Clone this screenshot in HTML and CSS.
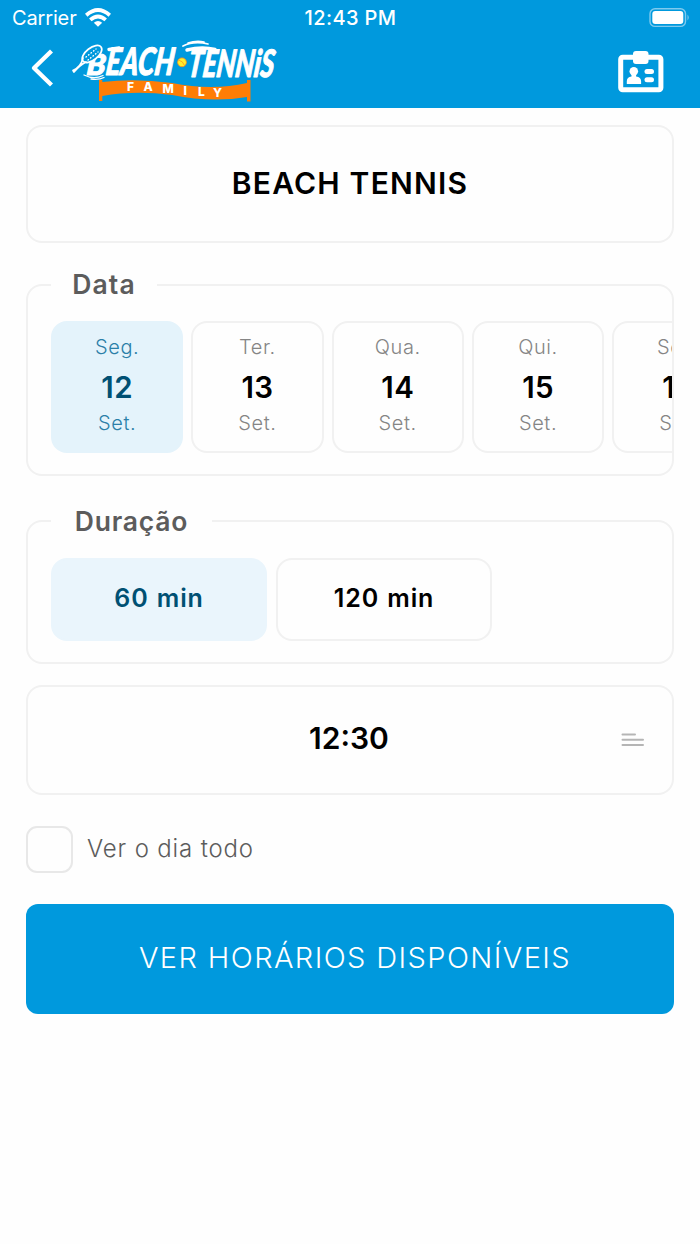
FILE: index.html
```html
<!DOCTYPE html>
<html lang="pt-BR">
<head>
<meta charset="utf-8">
<title>Beach Tennis Family</title>
<link rel="stylesheet" href="styles.css">
</head>
<body>
<header class="header">
  <div class="status">
    <div class="status-left"><span class="carrier">Carrier</span>
      <svg class="wifi" width="26" height="20" viewBox="0 0 26 20"><g fill="none" stroke="#fff" stroke-width="3.800"><path d="M1.200 7.200Q13-3.200 24.800 7.200"/><path d="M5.300 11.900Q13 5.200 20.700 11.900"/></g><path d="M8.800 14.800Q13 11.300 17.200 14.800L13 18.800Z" fill="#fff"/></svg>
    </div>
    <time class="clock">12:43 PM</time>
    <svg class="battery" width="42" height="20" viewBox="0 0 42 20"><rect x="1" y=".8" width="35.500" height="17.600" rx="5" fill="none" stroke="#7fcaee" stroke-width="1.400"/><rect x="3.300" y="3" width="31" height="13" rx="3" fill="#fff"/><path d="M38.500 6.500q2.500 3 0 6z" fill="#7fcaee"/></svg>
  </div>
  <nav class="nav">
    <svg class="back" width="24" height="40" viewBox="0 0 24 40"><path d="M21.500 3L4 20L21.500 37" fill="none" stroke="#fff" stroke-width="4.300" stroke-linejoin="round"/></svg>
    <svg class="logo" width="214" height="64" viewBox="70 38 214 64">
      <path d="M99 80H102.300V82Q135 78 172 83Q212 91 247 83V80H250.500V101.500H247V97Q212 103 172 95Q135 90 102.300 96V101H99Z" fill="#ff7d05"/>
      <g class="logo-word">
        <text transform="translate(86 74.500) skewX(-5)" textLength="19" lengthAdjust="spacingAndGlyphs">B</text>
        <text transform="translate(105 75) skewX(-7)" textLength="68" lengthAdjust="spacingAndGlyphs">EACH</text>
        <text transform="translate(187 76.500) skewX(-7)" textLength="86" lengthAdjust="spacingAndGlyphs">TENNiS</text>
      </g>
      <g fill="none" stroke="#fff" stroke-linecap="round" stroke-linejoin="round">
        <ellipse cx="92" cy="54" rx="11.500" ry="6" transform="rotate(-38 92 54)" stroke-width="1.700" fill="#0099dd"/>
        <path d="M83 58Q81 67 73 70.500M86 62Q80 65 74 72L73 70.500" stroke-width="1.700"/>
        <path d="M86 57L96 49M88 60L98 52" stroke-width="1.300" stroke-dasharray=".6 2.600"/>
        <path d="M84 75Q94 80 103 75.500M91 79Q99 80 104 77.500" stroke-width="1.300"/>
        <path d="M183 46Q194 40.500 208 44M188 43Q196 40.500 204 42" stroke-width="1.700"/>
        <path d="M109 49.500L119 48M187 50Q202 46 215 49.500" stroke-width="3.400"/>
      </g>
      <circle cx="182" cy="62.300" r="4.400" fill="#ffee2b" stroke="#ff8b18" stroke-width=".8"/><path d="M178.500 60Q183 61 184.500 65.500" stroke="#ff8b18" stroke-width=".7" fill="none"/>
      <g class="logo-sub"><text x="127" y="90.500">F</text><text x="143.500" y="91">A</text><text x="162.500" y="92.500">M</text><text x="183.500" y="94.500">I</text><text x="198" y="96">L</text><text x="213" y="97">Y</text></g>
    </svg>
    <svg class="badge" width="46" height="42" viewBox="0 0 46 42"><rect x="2.700" y="6.200" width="40.200" height="32.600" rx="2" fill="none" stroke="#fff" stroke-width="5"/><rect x="15" y="0" width="15.500" height="13" rx="3" fill="#fff"/><g fill="#fff"><circle cx="15.800" cy="20.200" r="4.300"/><path d="M13.500 23h4.600v2.500q5 .8 5 4.700V33H8.800v-2.800q0-3.900 4.700-4.700z"/><rect x="26.500" y="18" width="9.500" height="5" rx="2.500"/><rect x="26.500" y="26.300" width="9.500" height="5" rx="2.500"/></g></svg>
  </nav>
</header>
<main class="content">
  <section class="card sport"><span>BEACH TENNIS</span></section>
  <section class="card group dates">
    <h2 class="legend"><span>Data</span></h2>
    <div class="days">
      <div class="day selected"><span class="wk">Seg.</span><b>12</b><span class="mo">Set.</span></div>
      <div class="day"><span class="wk">Ter.</span><b>13</b><span class="mo">Set.</span></div>
      <div class="day"><span class="wk">Qua.</span><b>14</b><span class="mo">Set.</span></div>
      <div class="day"><span class="wk">Qui.</span><b>15</b><span class="mo">Set.</span></div>
      <div class="day"><span class="wk">Sex.</span><b>16</b><span class="mo">Set.</span></div>
    </div>
  </section>
  <section class="card group durations">
    <h2 class="legend wide"><span>Duração</span></h2>
    <div class="options"><div class="option selected">60 min</div><div class="option">120 min</div></div>
  </section>
  <section class="card hour"><span>12:30</span>
    <svg class="lines" width="24" height="16" viewBox="0 0 24 16"><path d="M1.500 2.500H14M1.500 7.800H22M1.500 13H22" stroke="#b5b5b5" stroke-width="2" stroke-linecap="round"/></svg>
  </section>
  <label class="check"><span class="box"></span><span class="check-text">Ver o dia todo</span></label>
  <button class="submit"><span>VER HORÁRIOS DISPONÍVEIS</span></button>
</main>
</body>
</html>
```
FILE: styles.css
```css
* { box-sizing: border-box; }
body { margin: 0; background: #fefefe; font-family: Inter, "Liberation Sans", sans-serif; color: #000; }
svg { display: block; flex: none; }
.header { height: 108px; background: #0099dd; color: #fff; }
.status { height: 36px; padding: 0 9px 0 12px; display: grid; grid-template-columns: 1fr auto 1fr; align-items: center; }
.status-left { display: flex; align-items: center; gap: 8px; margin-top: -1px; }
.carrier { font-size: 20px; letter-spacing: -.15px; }
.clock { font-size: 20px; font-weight: 500; letter-spacing: .4px; margin-right: 2px; }
.battery { justify-self: end; margin-top: -1px; }
.nav { height: 72px; display: flex; align-items: flex-start; padding: 2px 36px 0 30px; }
.back { margin-top: 10px; }
.logo { margin-left: 16px; }
.badge { margin: 13px 0 0 auto; }
.logo-word { font: italic 900 38px Lato, sans-serif; fill: #fff; stroke: #fff; stroke-width: 1px; stroke-linejoin: round; }
.logo-word text:first-child { font-size: 29px; }
.logo-sub { font: 800 12px Inter, sans-serif; fill: #fff; }
.content { padding: 17px 26px 0 26px; }
.card { border: 2px solid #f1f1f1; border-radius: 16px; background: #fefefe; }
.sport { height: 118px; display: flex; align-items: center; justify-content: center; padding-bottom: 3px; font-size: 30px; font-weight: 600; letter-spacing: 1.2px; }
.group { padding-left: 23px; }
.legend { margin: -22px 0 0; width: 106px; height: 44px; background: #fefefe; color: #5c5c5c; font-size: 26.500px; font-weight: 600; line-height: 40px; text-align: center; letter-spacing: 1.1px; }
.legend.wide { width: 161px; letter-spacing: .8px; }
.dates { height: 192px; margin-top: 41px; }
.days { margin-top: 13px; display: flex; gap: 8px; overflow: hidden; }
.day { flex: none; width: 132.300px; height: 132px; border: 2px solid #f1f1f1; border-radius: 16px; display: flex; flex-direction: column; align-items: center; color: #858585; font-size: 20px; padding-top: 10px; line-height: 28px; }
.day b { color: #000; font-size: 29.500px; font-weight: 600; line-height: 34px; margin: 9px 0 5px; letter-spacing: .4px; }
.day .wk, .day .mo { font-weight: 300; letter-spacing: .6px; }
.day.selected { background: #e4f3fb; border-color: #e4f3fb; color: #2b7fa8; }
.day.selected b { color: #005073; }
.durations { height: 144px; margin-top: 44px; }
.legend.wide { line-height: 42px; }
.options { display: flex; gap: 9px; margin-top: 14px; }
.option { width: 216px; height: 83px; border: 2px solid #f1f1f1; border-radius: 16px; display: flex; align-items: center; justify-content: center; font-size: 25px; font-weight: 600; padding-bottom: 3px; letter-spacing: .9px; word-spacing: 1px; }
.option.selected { background: #eaf5fc; border-color: #eaf5fc; color: #005073; }
.hour { height: 110px; margin-top: 21px; display: grid; grid-template-columns: 1fr auto 1fr; align-items: center; padding-right: 27px; padding-left: 25px; font-size: 30px; font-weight: 600; }
.hour span { grid-column: 2; padding-bottom: 4px; }
.lines { justify-self: end; }
.check { display: flex; align-items: center; height: 48px; margin-top: 30px; gap: 14px; color: #5c5c5c; font-size: 24px; font-weight: 300; letter-spacing: .85px; }
.check-text { padding-bottom: 1px; }
.box { width: 47px; height: 47px; border: 2px solid #e8e8e8; border-radius: 11px; }
.submit { display: flex; align-items: center; justify-content: center; width: 100%; height: 110px; margin: 31px 0 0; padding: 0 0 4px 10px; border: 0; border-radius: 12px; background: #0099dd; color: #fff; font: 300 29px Inter, sans-serif; letter-spacing: 1.400px; }
```
